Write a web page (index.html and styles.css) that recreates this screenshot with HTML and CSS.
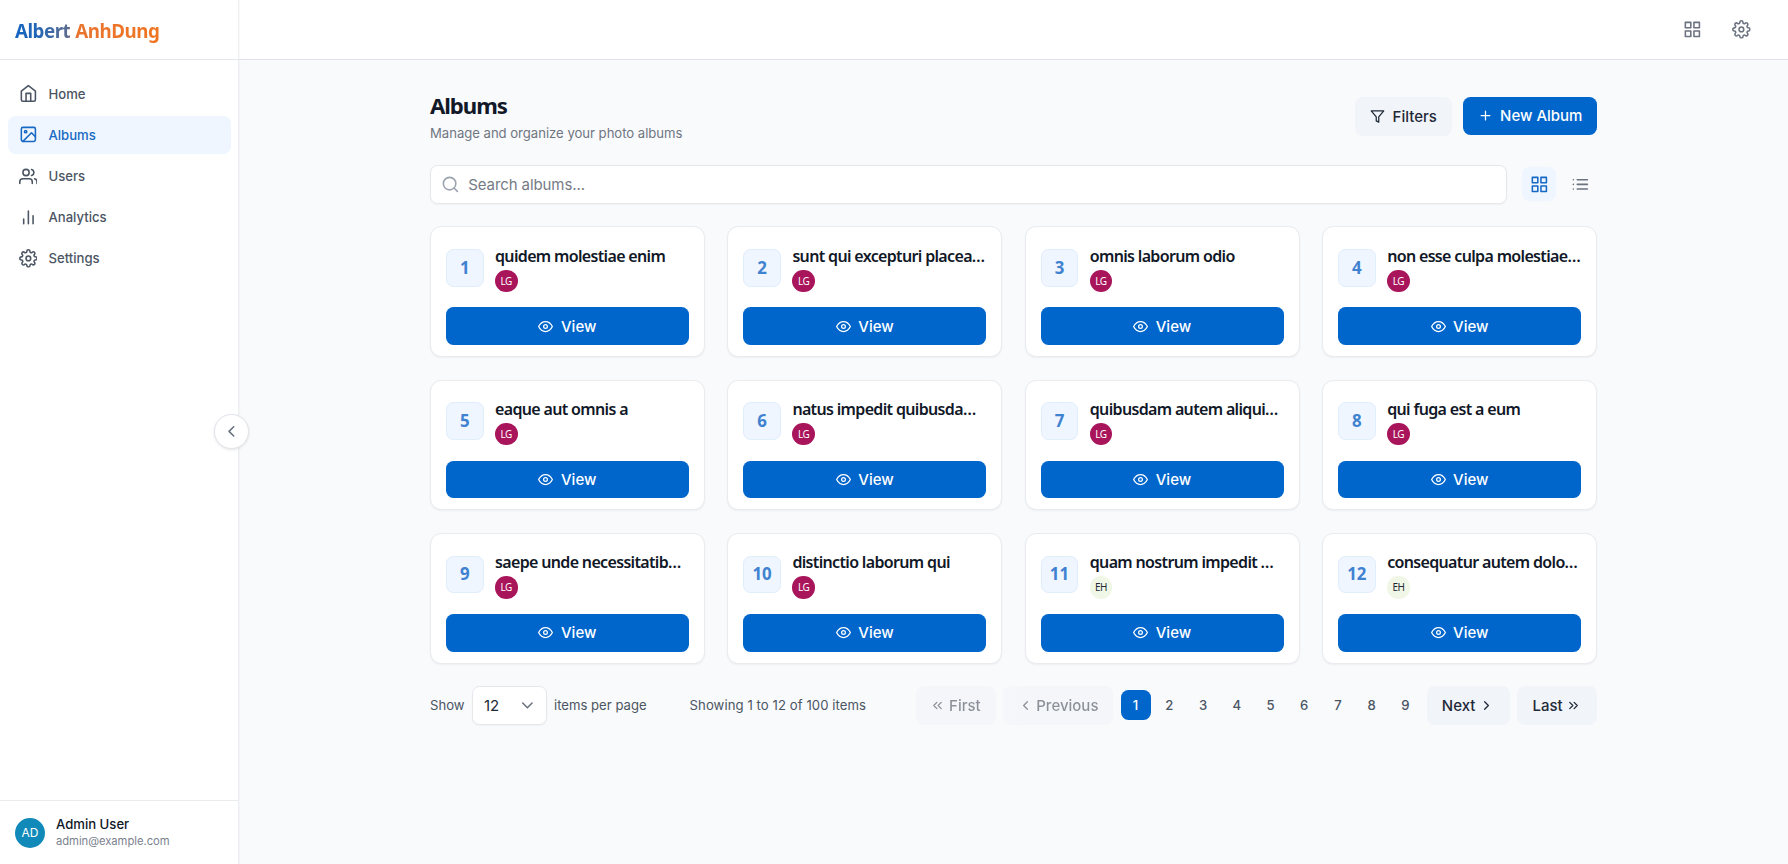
FILE: index.html
```html
<!DOCTYPE html>
<html lang="en">
<head>
<meta charset="utf-8">
<title>Albums</title>
<link rel="stylesheet" href="styles.css">
</head>
<body>
<svg class="sprite" aria-hidden="true">
  <symbol id="home" viewBox="0 0 24 24"><path d="m3 9 9-7 9 7v11a2 2 0 0 1-2 2H5a2 2 0 0 1-2-2z"/><path d="M9 22V12h6v10"/></symbol>
  <symbol id="image" viewBox="0 0 24 24"><rect x="3" y="3" width="18" height="18" rx="2"/><circle cx="8.5" cy="8.5" r="1.5"/><path d="m5 21 11-11 5 5"/></symbol>
  <symbol id="users" viewBox="0 0 24 24"><path d="M17 21v-2a4 4 0 0 0-4-4H5a4 4 0 0 0-4 4v2"/><circle cx="9" cy="7" r="4"/><path d="M23 21v-2a4 4 0 0 0-3-3.87"/><path d="M16 3.13a4 4 0 0 1 0 7.75"/></symbol>
  <symbol id="chart" viewBox="0 0 24 24"><path d="M18 20V10M12 20V4M6 20v-6"/></symbol>
  <symbol id="gear" viewBox="0 0 24 24"><circle cx="12" cy="12" r="3"/><path d="M19.4 15a1.65 1.65 0 0 0 .33 1.82l.06.06a2 2 0 0 1 0 2.83 2 2 0 0 1-2.83 0l-.06-.06a1.65 1.65 0 0 0-1.82-.33 1.65 1.65 0 0 0-1 1.51V21a2 2 0 0 1-2 2 2 2 0 0 1-2-2v-.09A1.65 1.65 0 0 0 9 19.4a1.65 1.65 0 0 0-1.82.33l-.06.06a2 2 0 0 1-2.83 0 2 2 0 0 1 0-2.83l.06-.06a1.65 1.65 0 0 0 .33-1.82 1.65 1.65 0 0 0-1.51-1H3a2 2 0 0 1-2-2 2 2 0 0 1 2-2h.09A1.65 1.65 0 0 0 4.6 9a1.65 1.65 0 0 0-.33-1.82l-.06-.06a2 2 0 0 1 0-2.83 2 2 0 0 1 2.83 0l.06.06a1.65 1.65 0 0 0 1.82.33H9a1.65 1.65 0 0 0 1-1.51V3a2 2 0 0 1 2-2 2 2 0 0 1 2 2v.09a1.65 1.65 0 0 0 1 1.51 1.65 1.65 0 0 0 1.82-.33l.06-.06a2 2 0 0 1 2.83 0 2 2 0 0 1 0 2.83l-.06.06a1.65 1.65 0 0 0-.33 1.82V9a1.65 1.65 0 0 0 1.51 1H21a2 2 0 0 1 2 2 2 2 0 0 1-2 2h-.09a1.65 1.65 0 0 0-1.51 1z"/></symbol>
  <symbol id="grid" viewBox="0 0 24 24"><path d="M3 3h7v7H3zM14 3h7v7h-7zM14 14h7v7h-7zM3 14h7v7H3z"/></symbol>
  <symbol id="list" viewBox="0 0 24 24"><path d="M8 6h13M8 12h13M8 18h13M3 6h.01M3 12h.01M3 18h.01"/></symbol>
  <symbol id="filter" viewBox="0 0 24 24"><path d="M22 3H2l8 9.46V19l4 2v-8.54z"/></symbol>
  <symbol id="plus" viewBox="0 0 24 24"><path d="M12 5v14M5 12h14"/></symbol>
  <symbol id="search" viewBox="0 0 24 24"><circle cx="11" cy="11" r="8"/><path d="m21 21-4.35-4.35"/></symbol>
  <symbol id="eye" viewBox="0 0 24 24"><path d="M1 12s4-8 11-8 11 8 11 8-4 8-11 8-11-8-11-8z"/><circle cx="12" cy="12" r="3"/></symbol>
  <symbol id="left" viewBox="0 0 24 24"><path d="m15 18-6-6 6-6"/></symbol>
  <symbol id="right" viewBox="0 0 24 24"><path d="m9 18 6-6-6-6"/></symbol>
  <symbol id="down" viewBox="0 0 24 24"><path d="m6 9 6 6 6-6"/></symbol>
  <symbol id="first" viewBox="0 0 24 24"><path d="m11 17-5-5 5-5M18 17l-5-5 5-5"/></symbol>
  <symbol id="last" viewBox="0 0 24 24"><path d="m13 17 5-5-5-5M6 17l5-5-5-5"/></symbol>
</svg>
<div class="app">
  <aside class="sidebar">
    <div class="brand"><span class="brand-text">Albert AnhDung</span></div>
    <nav class="nav">
      <a class="nav-item"><svg class="icon"><use href="#home"/></svg>Home</a>
      <a class="nav-item active"><svg class="icon"><use href="#image"/></svg>Albums</a>
      <a class="nav-item"><svg class="icon"><use href="#users"/></svg>Users</a>
      <a class="nav-item"><svg class="icon"><use href="#chart"/></svg>Analytics</a>
      <a class="nav-item"><svg class="icon"><use href="#gear"/></svg>Settings</a>
    </nav>
    <div class="profile">
      <span class="profile-avatar">AD</span>
      <div><div class="profile-name">Admin User</div><div class="profile-mail">admin@example.com</div></div>
    </div>
    <button class="collapse"><svg class="icon"><use href="#left"/></svg></button>
  </aside>
  <div class="page">
    <header class="topbar">
      <svg class="icon"><use href="#grid"/></svg>
      <svg class="icon"><use href="#gear"/></svg>
    </header>
    <main class="content">
      <section class="heading">
        <div><h1 class="title">Albums</h1><p class="subtitle">Manage and organize your photo albums</p></div>
        <div class="actions">
          <button class="btn soft"><svg class="icon small"><use href="#filter"/></svg>Filters</button>
          <button class="btn primary new"><svg class="icon small"><use href="#plus"/></svg>New Album</button>
        </div>
      </section>
      <section class="tools">
        <div class="search"><svg class="icon"><use href="#search"/></svg><span>Search albums...</span></div>
        <div class="views">
          <span class="view-toggle on"><svg class="icon"><use href="#grid"/></svg></span>
          <span class="view-toggle"><svg class="icon"><use href="#list"/></svg></span>
        </div>
      </section>
      <section class="cards" id="cards"></section>
      <section class="pager">
        <div class="per-page">Show<span class="select">12<svg class="icon"><use href="#down"/></svg></span>items per page</div>
        <div class="range">Showing 1 to 12 of 100 items</div>
        <div class="pages">
          <button class="btn soft off first"><svg class="icon small"><use href="#first"/></svg>First</button>
          <button class="btn soft off prev"><svg class="icon small"><use href="#left"/></svg>Previous</button>
          <div class="numbers"><span class="num current">1</span><span class="num">2</span><span class="num">3</span><span class="num">4</span><span class="num">5</span><span class="num">6</span><span class="num">7</span><span class="num">8</span><span class="num">9</span></div>
          <button class="btn soft next">Next<svg class="icon small"><use href="#right"/></svg></button>
          <button class="btn soft last">Last<svg class="icon small"><use href="#last"/></svg></button>
        </div>
      </section>
    </main>
  </div>
</div>
<script src="app.js"></script>
</body>
</html>
```
FILE: styles.css
```css
* { box-sizing: border-box; }
html { font-size: 15px; }
body { margin: 0; font-family: Inter, sans-serif; color: #111827; background: #f9fafc; }
button { font: inherit; border: 0; margin: 0; }
.sprite { display: none; }
.icon { width: 18.75px; height: 18.75px; flex: none; fill: none; stroke: currentColor; stroke-width: 2; stroke-linecap: round; stroke-linejoin: round; }
.icon.small { width: 15px; height: 15px; }

.app { display: flex; height: 864px; overflow: hidden; }
.sidebar { position: relative; display: flex; flex-direction: column; width: 239px; flex: none; background: #fff; border-right: 1px solid #eceef1; box-shadow: 0 0 2px rgba(0,0,0,.08); z-index: 1; }
.brand { display: flex; align-items: center; height: 60px; padding: 2px 15px 0; border-bottom: 1px solid #e3e6eb; }
.brand-text { font: 700 18.75px/28px "Noto Sans", sans-serif; letter-spacing: -.48px; word-spacing: .7px; white-space: nowrap; background: linear-gradient(90deg, #1565c0 0%, #1f66b8 14%, #5c6b8f 37%, #e8742f 43%, #f07522 100%); background-clip: text; -webkit-background-clip: text; color: transparent; }
.nav { display: flex; flex-direction: column; gap: 3.75px; flex: 1; padding: 15px 7.5px; }
.nav-item { display: flex; align-items: center; gap: 11.25px; height: 37.4px; padding: 0 11px; border-radius: 7.5px; font-size: 13.125px; font-weight: 500; color: #4b5563; }
.nav-item.active { background: #eff6ff; color: #1769c4; }
.profile { display: flex; align-items: center; gap: 11px; height: 64px; padding: 0 15px; border-top: 1px solid #e9ebef; }
.profile-avatar { display: flex; align-items: center; justify-content: center; width: 30px; height: 30px; border-radius: 50%; background: #118ab9; color: #fff; font-size: 12px; }
.profile-name { font-size: 13.125px; line-height: 17px; font-weight: 500; color: #111827; }
.profile-mail { font-size: 11.25px; line-height: 16px; letter-spacing: -.05px; color: #7b828e; }
.collapse { position: absolute; left: 214px; top: 414px; display: flex; align-items: center; justify-content: center; width: 35px; height: 35px; padding: 0; border: 1px solid #e2e5ea; border-radius: 50%; background: #fff; box-shadow: 0 1px 3px rgba(0,0,0,.1); color: #6b7280; }

.page { flex: 1; min-width: 0; }
.topbar { display: flex; align-items: center; justify-content: flex-end; gap: 30px; height: 60px; padding-right: 37.5px; background: #fff; border-bottom: 1px solid #e0e4ea; color: #6b7280; }
.content { width: 1167px; margin: 0 auto; padding-top: 30px; }
.heading { display: flex; justify-content: space-between; height: 74.5px; }
.title { margin: 0; font: 700 22.2px/32px "Noto Sans", sans-serif; letter-spacing: -1.05px; }
.subtitle { margin: 0; font-size: 13.125px; line-height: 22px; letter-spacing: -.02px; color: #6f7682; }
.actions { display: flex; gap: 11px; padding-top: 7px; }
.btn { display: flex; align-items: center; justify-content: center; gap: 7.5px; height: 37.5px; padding: 0; border-radius: 7.5px; font-size: 15px; font-weight: 500; }
.soft { width: 97px; height: 38.5px; background: #f1f4f9; color: #1f2937; }
.primary { background: #0066cc; color: #fff; }
.new { width: 134px; }
.tools { display: flex; gap: 15px; align-items: center; height: 39px; }
.search { display: flex; align-items: center; gap: 8.5px; flex: 1; height: 39px; padding: 0 10px; background: #fff; border: 1px solid #e5e7eb; border-radius: 7.5px; box-shadow: 0 1px 2px rgba(0,0,0,.04); font-size: 15px; letter-spacing: -.09px; color: #757b85; }
.search .icon { color: #9ca3af; }
.views { display: flex; gap: 7.5px; }
.view-toggle { display: flex; align-items: center; justify-content: center; width: 33.75px; height: 33.75px; border-radius: 7.5px; color: #6b7280; }
.view-toggle.on { background: #eff6ff; color: #1769c4; }

.cards { display: grid; grid-template-columns: repeat(4, minmax(0, 1fr)); gap: 22.5px; margin-top: 22.75px; }
.card { height: 130.8px; padding: 15px; background: #fff; border: 1px solid #e9ebef; border-radius: 11.25px; box-shadow: 0 1px 2px rgba(0,0,0,.05); }
.card-head { display: flex; align-items: center; gap: 11.5px; height: 51px; }
.card-number { display: flex; align-items: center; justify-content: center; width: 37.5px; height: 37.5px; flex: none; background: #eff6ff; border: 1px solid #e0edfb; border-radius: 7.5px; color: #3f82d0; font: 700 16.875px/22px "Noto Sans", sans-serif; }
.card-info { min-width: 0; flex: 1; }
.card-title { overflow: hidden; text-overflow: ellipsis; white-space: nowrap; font: 600 16px/24px "Noto Sans", sans-serif; letter-spacing: -.66px; color: #111827; }
.card-avatar { display: flex; align-items: center; justify-content: center; width: 22.5px; height: 22.5px; margin-top: 2px; border-radius: 50%; background: #a8155b; color: #fff; font: 10px "Noto Sans", sans-serif; letter-spacing: -.5px; }
.card-avatar.light { background: #f0f7e6; color: #1f2937; }
.card .btn { width: 100%; margin-top: 14.2px; }

.pager { display: flex; align-items: center; height: 39px; margin-top: 22.3px; font-size: 13.125px; color: #4b5563; }
.per-page { display: flex; align-items: center; gap: 7.5px; }
.range { margin-left: 43px; letter-spacing: .08px; }
.select { display: flex; align-items: center; justify-content: space-between; width: 74.5px; height: 39px; padding: 0 9px 0 11px; background: #fff; border: 1px solid #e5e7eb; border-radius: 7.5px; box-shadow: 0 1px 2px rgba(0,0,0,.04); font-size: 15px; color: #1f2937; }
.select .icon { color: #6b7280; }
.pages { display: flex; align-items: center; gap: 7.5px; margin-left: auto; }
.pages .btn { gap: 3.75px; }
.numbers { display: flex; gap: 3.75px; margin-right: -1.5px; }
.num { display: flex; align-items: center; justify-content: center; width: 30px; height: 30px; border-radius: 7.5px; font-weight: 500; }
.num.current { background: #0066cc; color: #fff; }
.off { opacity: .5; }
.first { width: 80px; }
.prev { width: 110px; }
.next { width: 83px; }
.last { width: 80px; }
```
FILE: app.js
```js
const albums = [
  ["quidem molestiae enim", "LG"],
  ["sunt qui excepturi placeat culpa", "LG"],
  ["omnis laborum odio", "LG"],
  ["non esse culpa molestiae omnis sed optio", "LG"],
  ["eaque aut omnis a", "LG"],
  ["natus impedit quibusdam illo est", "LG"],
  ["quibusdam autem aliquid et et quia", "LG"],
  ["qui fuga est a eum", "LG"],
  ["saepe unde necessitatibus rem", "LG"],
  ["distinctio laborum qui", "LG"],
  ["quam nostrum impedit mollitia quod et dolor", "EH"],
  ["consequatur autem doloribus natus consectetur", "EH"]
];
document.getElementById("cards").innerHTML = albums.map(([title, owner], i) => `
  <article class="card">
    <div class="card-head">
      <span class="card-number">${i + 1}</span>
      <div class="card-info">
        <div class="card-title">${title}</div>
        <span class="card-avatar${owner === "EH" ? " light" : ""}">${owner}</span>
      </div>
    </div>
    <button class="btn primary"><svg class="icon small"><use href="#eye"/></svg>View</button>
  </article>`).join("");
```
